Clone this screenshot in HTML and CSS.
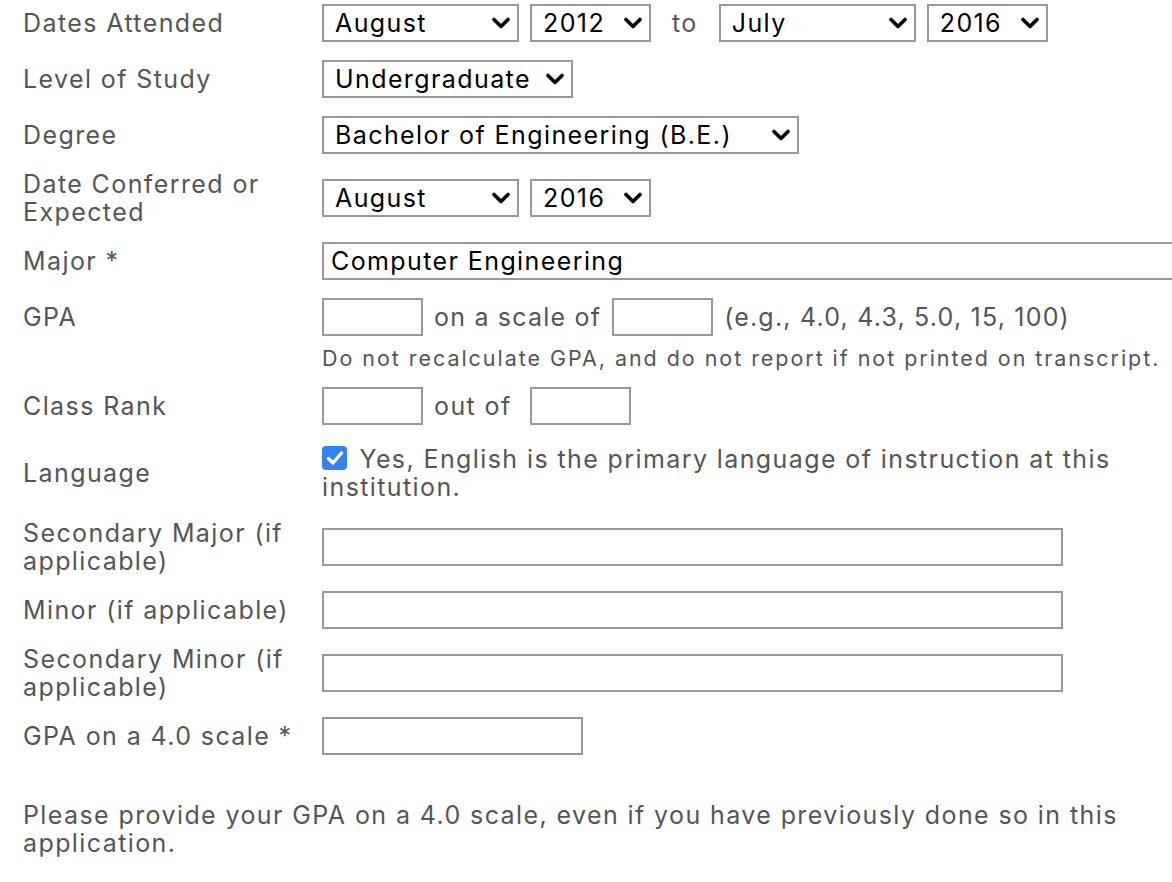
FILE: index.html
```html
<!DOCTYPE html>
<html lang="en">
<head>
<meta charset="utf-8">
<title>Education</title>
<link rel="stylesheet" href="styles.css">
</head>
<body>
<div class="page">
  <div class="form">
    <div class="label">Dates Attended</div>
    <div class="control">
      <div class="inline">
        <select class="sel w-month"><option>August</option></select>
        <select class="sel w-year"><option>2012</option></select>
        <span class="word to">to</span>
        <select class="sel w-month"><option>July</option></select>
        <select class="sel w-year"><option>2016</option></select>
      </div>
    </div>

    <div class="label">Level of Study</div>
    <div class="control">
      <select class="sel w-level"><option>Undergraduate</option></select>
    </div>

    <div class="label">Degree</div>
    <div class="control">
      <select class="sel w-degree"><option>Bachelor of Engineering (B.E.)</option></select>
    </div>

    <div class="label">Date Conferred or Expected</div>
    <div class="control">
      <div class="inline">
        <select class="sel w-month"><option>August</option></select>
        <select class="sel w-year"><option>2016</option></select>
      </div>
    </div>

    <div class="label">Major *</div>
    <div class="control">
      <input class="txt w-major" type="text" value="Computer Engineering">
    </div>

    <div class="label">GPA</div>
    <div class="control">
      <div class="inline">
        <input class="txt w-small" type="text">
        <span class="word tight">on a scale of</span>
        <input class="txt w-small" type="text">
        <span class="word tight">(e.g., 4.0, 4.3, 5.0, 15, 100)</span>
      </div>
    </div>

    <div class="label label-empty"></div>
    <div class="help">Do not recalculate GPA, and do not report if not printed on transcript.</div>

    <div class="label">Class Rank</div>
    <div class="control">
      <div class="inline">
        <input class="txt w-small" type="text">
        <span class="word outof">out of</span>
        <input class="txt w-small" type="text">
      </div>
    </div>

    <div class="label">Language</div>
    <div class="control">
      <label class="check"><input class="cb" type="checkbox" checked> Yes, English is the primary language of instruction at this institution.</label>
    </div>

    <div class="label">Secondary Major (if applicable)</div>
    <div class="control">
      <input class="txt w-wide" type="text">
    </div>

    <div class="label">Minor (if applicable)</div>
    <div class="control">
      <input class="txt w-wide" type="text">
    </div>

    <div class="label">Secondary Minor (if applicable)</div>
    <div class="control">
      <input class="txt w-wide" type="text">
    </div>

    <div class="label">GPA on a 4.0 scale *</div>
    <div class="control">
      <input class="txt w-gpa4" type="text">
    </div>
  </div>

  <p class="note">Please provide your GPA on a 4.0 scale, even if you have previously done so in this application.</p>
</div>
</body>
</html>
```

FILE: styles.css
```css
html, body {
  margin: 0;
  padding: 0;
  background: #fff;
  overflow: hidden;
}

body {
  font-family: Inter, "Open Sans", "Liberation Sans", sans-serif;
  font-size: 25px;
  line-height: 28px;
  letter-spacing: 1.4px;
  color: #555;
}

.page {
  width: 1172px;
  height: 882px;
  overflow: hidden;
  padding-left: 23px;
  box-sizing: border-box;
}

.form {
  display: grid;
  grid-template-columns: 299px 850px;
  margin-top: -5px;
}

.label {
  padding: 7px 0;
  align-self: center;
}

.label-empty {
  padding: 0;
}

.control {
  padding: 7px 0;
  align-self: center;
  min-width: 0;
}

.inline {
  display: flex;
  align-items: center;
  gap: 11px;
}

.word {
  white-space: nowrap;
  color: #555;
}

.tight {
  letter-spacing: 1.2px;
}

.to {
  margin: 0 10px;
}

.outof {
  margin-right: 7px;
}

.sel,
.txt {
  display: block;
  box-sizing: border-box;
  height: 38px;
  margin: 2px 0;
  border: 2px solid #999;
  border-radius: 0;
  background-color: #fff;
  font-family: inherit;
  font-size: 25px;
  letter-spacing: inherit;
  color: #000;
  outline: none;
}

.sel {
  -webkit-appearance: none;
  appearance: none;
  padding: 0 34px 0 11px;
  background-image: url("data:image/svg+xml,%3Csvg xmlns='http://www.w3.org/2000/svg' width='20' height='12' viewBox='0 0 20 12'%3E%3Cpath d='M3 2.5 L10 9.5 L17 2.5' fill='none' stroke='%23000' stroke-width='3.6' stroke-linecap='round' stroke-linejoin='round'/%3E%3C/svg%3E");
  background-repeat: no-repeat;
  background-position: right 6px center;
  background-size: 20px 12px;
}

.txt {
  padding: 0 7px;
}

.w-month { width: 197px; }
.w-year { width: 121px; }
.w-level { width: 251px; }
.w-degree { width: 477px; }
.w-major { width: 900px; }
.w-small { width: 101px; }
.w-wide { width: 741px; }
.w-gpa4 { width: 261px; }

.help {
  font-size: 21.5px;
  line-height: 26px;
  letter-spacing: 1.95px;
  padding: 0 0 7px;
  white-space: nowrap;
}

.check {
  display: block;
  padding: 4px 0;
  line-height: 28px;
}

.cb {
  -webkit-appearance: none;
  appearance: none;
  display: inline-block;
  width: 25px;
  height: 24px;
  margin: 0 4px 0 0;
  vertical-align: -2px;
  border-radius: 4px;
  background-color: #3480f6;
  background-image: url("data:image/svg+xml,%3Csvg xmlns='http://www.w3.org/2000/svg' width='24' height='24' viewBox='0 0 24 24'%3E%3Cpath d='M5.5 12.5 L10 17 L18.5 7' fill='none' stroke='%23fff' stroke-width='3.4' stroke-linecap='round' stroke-linejoin='round'/%3E%3C/svg%3E");
  background-repeat: no-repeat;
  background-position: center;
}

.note {
  margin: 37px 0 0;
  line-height: 28px;
}
```
